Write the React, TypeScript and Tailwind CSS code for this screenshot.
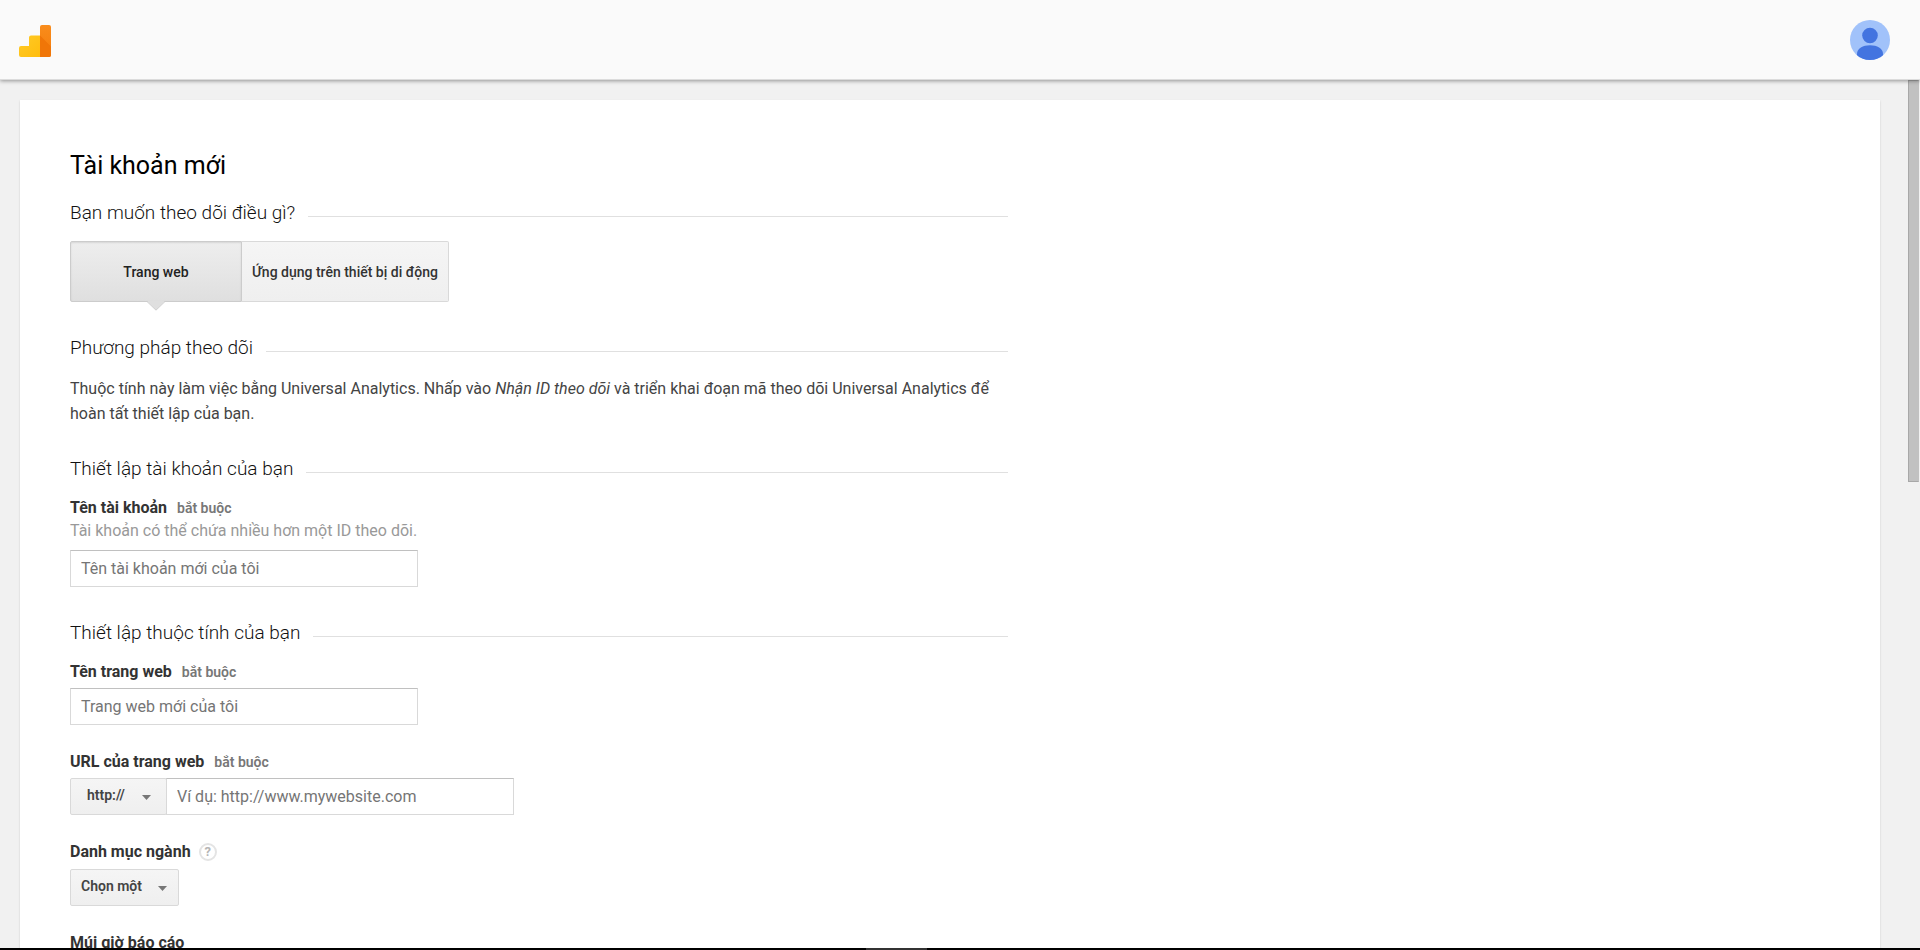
import { useState } from "react";
import type { ReactNode } from "react";
import clsx from "clsx";

const inputClass =
    "h-[37px] w-[348px] border border-[#d9d9d9] border-t-[#c0c0c0] bg-white px-[10px] text-base text-[#444] outline-none placeholder:text-[#757575]";

const Logo = () => (
    <svg width="32" height="32" viewBox="0 0 32 32" aria-hidden="true">
        <defs>
            <linearGradient id="bars" x1="0" y1="0" x2="1" y2="1">
                <stop offset="0" stopColor="#ffca28" />
                <stop offset="1" stopColor="#ffbd0c" />
            </linearGradient>
            <linearGradient id="tall" x1="0" y1="0" x2="0" y2="1">
                <stop offset="0" stopColor="#f98c1c" />
                <stop offset="1" stopColor="#f57c0a" />
            </linearGradient>
        </defs>
        <path d="M2 21h8V12.500a2 2 0 0 1 2-2h9.500V32H2a2 2 0 0 1-2-2v-7a2 2 0 0 1 2-2z" fill="url(#bars)" />
        <path d="M23 0h7a2 2 0 0 1 2 2v28a2 2 0 0 1-2 2h-9V2a2 2 0 0 1 2-2z" fill="url(#tall)" />
        <path d="M21 10.500 32 21.500V30a2 2 0 0 1-2 2h-9z" fill="#f07608" />
    </svg>
);

const Avatar = () => (
    <svg width="40" height="40" viewBox="0 0 40 40" aria-hidden="true">
        <defs>
            <clipPath id="round">
                <circle cx="20" cy="20" r="20" />
            </clipPath>
        </defs>
        <g clipPath="url(#round)">
            <rect width="40" height="40" fill="#a1c2fa" />
            <circle cx="20" cy="15.500" r="7.800" fill="#4374e0" />
            <path d="M7 34c0-6 6-8.800 13-8.800S33 28 33 34v6H7z" fill="#4374e0" />
        </g>
    </svg>
);

const SectionTitle = ({ children, className }: { children: ReactNode; className?: string }) => (
    <div className={clsx("flex items-end gap-[13px]", className)}>
        <h2 className="text-[19px] leading-6 font-[350] text-[#111]">{children}</h2>
        <div className="mb-2 h-px flex-1 bg-[#e0e0e0]" />
    </div>
);

const FieldLabel = ({ htmlFor, required, children }: { htmlFor: string; required?: boolean; children: ReactNode }) => (
    <div className="flex items-baseline gap-[10px] leading-6">
        <label htmlFor={htmlFor} className="text-base leading-6 font-bold text-[#333]">
            {children}
        </label>
        {required && <span className="text-sm leading-6 font-semibold text-[#777]">bắt buộc</span>}
    </div>
);

type DropdownProps = {
    id: string;
    label?: string;
    options: string[];
    className?: string;
    arrowClass?: string;
};

const Dropdown = ({ id, label, options, className, arrowClass = "right-3" }: DropdownProps) => (
    <div className="relative">
        <select
            id={id}
            aria-label={label}
            className={clsx(
                "block h-[37px] appearance-none rounded-[2px] border border-[#d9d9d9] bg-linear-to-b from-[#f5f5f5] to-[#efefef] pb-[3px] text-sm font-semibold text-[#444] outline-none",
                className
            )}
        >
            {options.map((option) => (
                <option key={option}>{option}</option>
            ))}
        </select>
        <svg width="9" height="5" viewBox="0 0 9 5" className={clsx("pointer-events-none absolute top-[17px]", arrowClass)} aria-hidden="true">
            <path d="M0 0h9L4.500 5z" fill="#777" />
        </svg>
    </div>
);

const App = () => {
    const [tab, setTab] = useState("web");

    return (
        <div className="flex h-screen flex-col overflow-hidden bg-[#f1f1f1] font-[Roboto,sans-serif]">
            <header className="relative z-10 flex h-20 shrink-0 items-center justify-between border-b border-[#dcdcdc] bg-[#fafafa] pr-[30px] pl-[19px] shadow-[0_1px_4px_rgba(0,0,0,0.4)]">
                <a href="#" aria-label="Analytics" className="pt-[3px]">
                    <Logo />
                </a>
                <button type="button" aria-label="Google" className="rounded-full">
                    <Avatar />
                </button>
            </header>

            <div className="flex min-h-0 flex-1">
                <main className="min-w-0 flex-1 overflow-hidden pt-5 pr-7 pl-5">
                    <form className="bg-white px-[50px] pt-[50px] pb-12 shadow-[0_1px_2px_rgba(0,0,0,0.15)]">
                        <div className="max-w-[938px]">
                            <h1 className="text-[25px] leading-8 font-normal text-black">Tài khoản mới</h1>

                            <SectionTitle className="mt-[19px]">Bạn muốn theo dõi điều gì?</SectionTitle>
                            <div className="mt-4 flex h-[61px] text-sm font-medium">
                                <button
                                    type="button"
                                    onClick={() => setTab("web")}
                                    className={clsx(
                                        "relative w-[172px] rounded-l-[2px] border",
                                        tab === "web"
                                            ? "border-[#ccc] bg-linear-to-b from-[#eee] to-[#dfdfdf] text-[#222] shadow-[inset_0_1px_2px_rgba(0,0,0,0.1)]"
                                            : "border-[#d9d9d9] bg-linear-to-b from-[#f5f5f5] to-[#efefef] text-[#333]"
                                    )}
                                >
                                    Trang web
                                    {tab === "web" && (
                                        <svg width="18" height="10" viewBox="0 0 18 10" className="absolute top-[59px] left-[76px]" aria-hidden="true">
                                            <path d="M0 0h18L9 9z" fill="#dfdfdf" />
                                            <path d="M0 .5 9 9.200 18 .5" fill="none" stroke="#ccc" />
                                        </svg>
                                    )}
                                </button>
                                <button
                                    type="button"
                                    onClick={() => setTab("app")}
                                    className={clsx(
                                        "rounded-r-[2px] border border-l-0 px-[10px]",
                                        tab === "app"
                                            ? "border-[#ccc] bg-linear-to-b from-[#eee] to-[#dfdfdf] text-[#222]"
                                            : "border-[#d9d9d9] bg-linear-to-b from-[#f5f5f5] to-[#efefef] text-[#333]"
                                    )}
                                >
                                    Ứng dụng trên thiết bị di động
                                </button>
                            </div>

                            <SectionTitle className="mt-[34px]">Phương pháp theo dõi</SectionTitle>
                            <p className="mt-4 text-base leading-[25px] text-[#444]">
                                Thuộc tính này làm việc bằng Universal Analytics. Nhấp vào <em>Nhận ID theo dõi</em> và triển khai đoạn mã theo dõi
                                Universal Analytics để hoàn tất thiết lập của bạn.
                            </p>

                            <SectionTitle className="mt-[31px]">Thiết lập tài khoản của bạn</SectionTitle>
                            <div className="mt-[15px]">
                                <FieldLabel htmlFor="account" required>
                                    Tên tài khoản
                                </FieldLabel>
                                <p className="text-base leading-[22px] text-[#999]">Tài khoản có thể chứa nhiều hơn một ID theo dõi.</p>
                                <input id="account" type="text" placeholder="Tên tài khoản mới của tôi" className={clsx(inputClass, "mt-2 block")} />
                            </div>

                            <SectionTitle className="mt-[34px]">Thiết lập thuộc tính của bạn</SectionTitle>
                            <div className="mt-[15px] flex flex-col gap-[25px]">
                                <div>
                                    <FieldLabel htmlFor="site" required>
                                        Tên trang web
                                    </FieldLabel>
                                    <input id="site" type="text" placeholder="Trang web mới của tôi" className={clsx(inputClass, "mt-1 block")} />
                                </div>
                                <div>
                                    <FieldLabel htmlFor="url" required>
                                        URL của trang web
                                    </FieldLabel>
                                    <div className="mt-1 flex">
                                        <Dropdown
                                            id="protocol"
                                            label="http://"
                                            options={["http://", "https://"]}
                                            className="w-[97px] pl-4"
                                            arrowClass="right-4"
                                        />
                                        <input id="url" type="text" placeholder="Ví dụ: http://www.mywebsite.com" className={clsx(inputClass, "-ml-px")} />
                                    </div>
                                </div>
                                <div>
                                    <div className="flex items-center gap-2">
                                        <FieldLabel htmlFor="category">Danh mục ngành</FieldLabel>
                                        <button
                                            type="button"
                                            className="size-[18px] rounded-full border-2 border-[#e4e4e4] text-[13px] leading-[14px] font-bold text-[#b5b5b5]"
                                        >
                                            ?
                                        </button>
                                    </div>
                                    <div className="mt-[5px] flex">
                                        <Dropdown id="category" options={["Chọn một"]} className="w-[109px] pl-[10px]" />
                                    </div>
                                </div>
                                <div>
                                    <FieldLabel htmlFor="timezone">Múi giờ báo cáo</FieldLabel>
                                    <div className="mt-[5px] flex">
                                        <Dropdown id="timezone" options={["Việt Nam"]} className="w-[109px] pl-[10px]" />
                                    </div>
                                </div>
                            </div>
                        </div>
                    </form>
                </main>

                {/* Scroll thumb */}
                <div className="w-3 shrink-0 pr-px">
                    <div className="h-[402px] border border-[#a8a8a8] border-r-[#c1c1c1] bg-[#c1c1c1]" />
                </div>
            </div>

            {/* Taskbar edge */}
            <div className="relative z-10 flex h-0.5 shrink-0 justify-center bg-black">
                <div className="mr-[127px] w-[61px] bg-[#333]" />
            </div>
        </div>
    );
};

export default App;
